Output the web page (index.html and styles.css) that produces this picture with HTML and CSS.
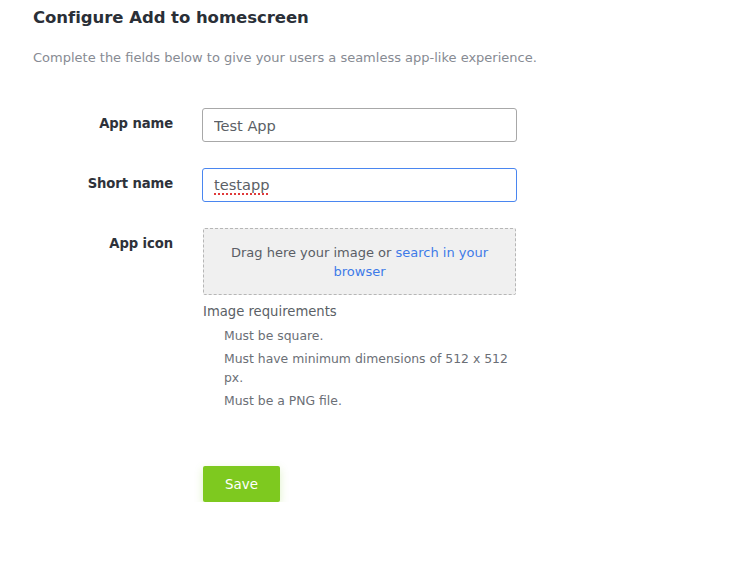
FILE: index.html
```html
<!DOCTYPE html>
<html>
<head>
<meta charset="utf-8">
<link rel="stylesheet" href="styles.css">
</head>
<body>
<div class="page">
  <h1 class="title">Configure Add to homescreen</h1>
  <p class="subtitle">Complete the fields below to give your users a seamless app-like experience.</p>
  <div class="form">
    <div class="row">
      <label class="label">App name</label>
      <div class="field"><input class="input" type="text" value="Test App"></div>
    </div>
    <div class="row">
      <label class="label">Short name</label>
      <div class="field"><div class="input focused"><span class="spell">testapp</span></div></div>
    </div>
    <div class="row row-icon">
      <label class="label">App icon</label>
      <div class="field">
        <div class="drop">
          <div class="drop-line">Drag here your image or <a class="link">search in your</a></div>
          <div class="drop-line"><a class="link">browser</a></div>
        </div>
        <div class="req-title">Image requirements</div>
        <ul class="req-list">
          <li>Must be square.</li>
          <li>Must have minimum dimensions of 512 x 512 px.</li>
          <li>Must be a PNG file.</li>
        </ul>
      </div>
    </div>
    <div class="actions">
      <button class="save">Save</button>
    </div>
  </div>
</div>
</body>
</html>
```
FILE: styles.css
```css
* { box-sizing: border-box; }
html, body { margin: 0; padding: 0; background: #fff; }
body { font-family: "DejaVu Sans", "Open Sans", sans-serif; color: #2d3139; }
.page { padding: 7px 0 0 33px; }
.title { margin: 0; font-size: 16.5px; font-weight: bold; color: #2a2f37; line-height: 22px; letter-spacing: -0.05px; }
.subtitle { margin: 21px 0 0; font-size: 13px; color: #878b93; line-height: 16px; letter-spacing: 0; }
.form { margin-top: 42px; }
.row { display: flex; align-items: flex-start; margin-bottom: 26px; }
.label { width: 140px; text-align: right; font-size: 13.2px; font-weight: bold; color: #2e323a; padding-top: 7px; line-height: 18px; letter-spacing: -0.1px; }
.field { margin-left: 29px; width: 315px; }
.input { display: block; width: 315px; height: 34px; border: 1px solid #a8a8a8; border-radius: 3px; padding: 0 11px; font-family: inherit; font-size: 14.6px; color: #5b5f66; line-height: 32px; outline: none; background: #fff; }
.input.focused { border-color: #4a86f0; }
.spell { text-decoration: underline dotted #e03a3a; text-decoration-thickness: 2px; text-underline-offset: 3px; }
.drop { margin-left: 1px; width: 313px; height: 67px; background: #f0f0f0; border: 1px dashed #b6b6b6; border-radius: 2px; text-align: center; font-size: 13px; color: #5a5e66; line-height: 19px; padding: 14px 10px 0; }
.drop-line { white-space: nowrap; }
.link { color: #3e7be8; }
.req-title { margin: 9px 0 0 1px; font-size: 13.2px; color: #5b5f66; line-height: 16px; }
.req-list { list-style: none; margin: 6px 0 0; padding: 0 0 0 22px; font-size: 12.4px; color: #6b6f76; line-height: 19px; width: 315px; }
.req-list li { margin-bottom: 4px; }
.actions { padding-left: 170px; margin-top: 52px; }
.save { width: 77px; height: 36px; border: none; border-radius: 2px; background: #7ec91f; color: #fff; font-family: inherit; font-size: 13.4px; box-shadow: 0 3px 8px rgba(126, 201, 31, 0.25); }
```
